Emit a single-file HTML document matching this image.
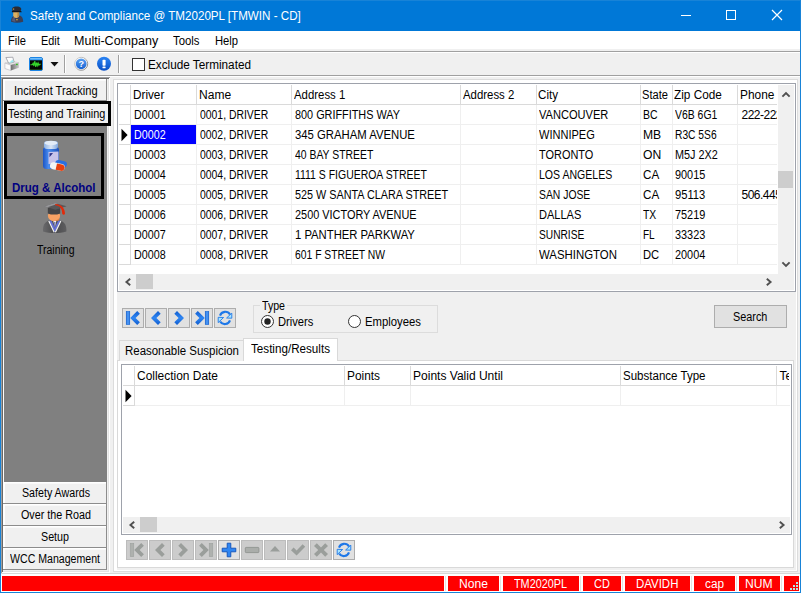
<!DOCTYPE html>
<html><head><meta charset="utf-8"><title>Safety and Compliance</title>
<style>
html,body{margin:0;padding:0}
body{width:801px;height:593px;overflow:hidden;background:#f0f0f0;position:relative;font:12px/16px "Liberation Sans", sans-serif}
#w{position:absolute;left:0;top:0;width:801px;height:593px;overflow:hidden}
#w div,#w span,#w svg{position:absolute;box-sizing:border-box}
#w span{white-space:pre;line-height:16px;transform-origin:0 0}
</style></head><body><div id="w">
<div style="left:0px;top:0px;width:801px;height:593px;background:#f0f0f0;"></div>
<div style="left:0px;top:0px;width:801px;height:31px;background:#0078d7;"></div>
<div style="left:0px;top:0px;width:1px;height:593px;background:#1883d7;"></div>
<div style="left:800px;top:0px;width:1px;height:593px;background:#1883d7;"></div>
<div style="left:0px;top:592px;width:801px;height:1px;background:#1883d7;"></div>
<div style="left:0px;top:0px;width:801px;height:1px;background:#1883d7;"></div>
<svg style="left:10px;top:6px" width="16" height="18" viewBox="0 0 16 18">
<path d="M1 15.800c0-3.800 1.500-6 4-6.600h4.200c2.500.6 4 2.800 4 6.600-3.800 1.300-8.400 1.300-12.200 0z" fill="#3a3f56"/>
<path d="M2 15c.2-2.400 1-4 2.400-4.800l1.200 5.800z" fill="#555b78"/>
<path d="M3.200 5.800h6v3.400c0 1.500-1.300 2.800-3 2.800s-3-1.300-3-2.800z" fill="#ddb062"/>
<path d="M7.400 6.500h1.800v3c-.3 1-1 1.800-1.800 2.200z" fill="#b98a45"/>
<path d="M1.900 3c.4-1.800 2.600-2.400 4.700-2.400s4.300.6 4.700 2.400l-.7 2.200H2.600z" fill="#2a2b35"/>
<path d="M2 4.900h9.200l.5 1.400H1.800z" fill="#17171e"/>
<rect x="6.200" y="13" width="1.500" height="1.300" fill="#d9a53c"/>
<rect x="2.800" y="2.500" width="1.400" height="1.200" fill="#c9a04c"/>
</svg>
<svg style="left:660px;top:0" width="140" height="31" viewBox="0 0 140 31" fill="none" stroke="#fff" stroke-width="1">
<path d="M21 15.500h10"/><rect x="66.500" y="10.500" width="9" height="9"/><path d="M112 10l10 10M122 10l-10 10" stroke-width="1.200"/></svg>
<div style="left:1px;top:31px;width:799px;height:18px;background:#fff;"></div>
<div style="left:1px;top:51px;width:799px;height:1px;background:#a0a0a0;"></div>
<div style="left:1px;top:52px;width:799px;height:1px;background:#fff;"></div>
<div style="left:1px;top:75px;width:799px;height:1px;background:#a0a0a0;"></div>
<div style="left:1px;top:76px;width:799px;height:1px;background:#fff;"></div>
<svg style="left:4px;top:56px" width="17" height="16" viewBox="0 0 17 16">
<defs><linearGradient id="pr1" x1="0" x2="1"><stop offset="0" stop-color="#6e6e6e"/><stop offset="1" stop-color="#c9c9c9"/></linearGradient></defs>
<path d="M.9 7.100L9.100 5.400 14.900 6.800 6.800 9.100z" fill="#e4e4e4" stroke="#b4b4b4" stroke-width=".4"/>
<path d="M1.900 1.500L8.800 1.200 10.100 6.100 4.700 7.300z" fill="#fdfdfd" stroke="#8d8d96" stroke-width=".7"/>
<path d="M4.900 6.900L8.600 3.400 9.700 6z" fill="#9cecf2"/>
<path d="M.9 7.100L6.800 9.100V14.500L.9 12.500z" fill="#fbfbfb" stroke="#a9a9b2" stroke-width=".5"/>
<path d="M6.800 9.100L14.900 6.800V11.800L6.800 14.500z" fill="url(#pr1)"/>
<rect x="12" y="7.800" width="1.800" height="1.300" fill="#35c41f"/>
</svg>
<svg style="left:29px;top:57px" width="14" height="14" viewBox="0 0 14 14">
<rect x=".5" y=".5" width="13" height="13" rx="1.600" fill="#050805" stroke="#1a84e6"/>
<rect x="1" y="1" width="12" height="2.300" fill="#2f95f0"/><rect x="1.200" y="1.300" width="11.600" height=".9" fill="#8fd0ff"/>
<path d="M1.500 7.800h1.800l.8-1.600.8 2.800.9-5 .9 6 .8-4.400.8 3 .8-2.600.8 2.200.7-1h1.200" fill="none" stroke="#35d82c" stroke-width="1.100"/>
<rect x="1" y="12" width="12" height=".8" fill="#1f4a1a"/>
</svg>
<svg style="left:50px;top:62px" width="9" height="5" viewBox="0 0 9 5"><path d="M.5 0h8L4.5 4.6z" fill="#111"/></svg>
<div style="left:64px;top:55px;width:1px;height:18px;background:#a0a0a0;"></div>
<div style="left:65px;top:55px;width:1px;height:18px;background:#fff;"></div>
<svg style="left:73px;top:56px" width="16" height="16" viewBox="0 0 16 16">
<defs><linearGradient id="hp1" x1="0" x2="0" y1="0" y2="1"><stop offset="0" stop-color="#fbfbfc"/><stop offset="1" stop-color="#b9bdc6"/></linearGradient>
<linearGradient id="hp2" x1="0" x2="0" y1="0" y2="1"><stop offset="0" stop-color="#5aa2f4"/><stop offset="1" stop-color="#1560d0"/></linearGradient>
<linearGradient id="hp3" x1="0" x2="1" y1="0" y2="1"><stop offset="0" stop-color="#d4d4d4"/><stop offset="1" stop-color="#6e6e6e"/></linearGradient></defs>
<circle cx="8.200" cy="7.800" r="6.500" fill="#fdfdfd" stroke="url(#hp3)" stroke-width=".9"/>
<circle cx="8.200" cy="7.800" r="5.400" fill="url(#hp2)"/>
<text x="8.200" y="11" text-anchor="middle" font-family="Liberation Sans, sans-serif" font-weight="bold" font-size="9" fill="#fff">?</text>
</svg>
<svg style="left:96px;top:56px" width="16" height="16" viewBox="0 0 16 16">
<defs><linearGradient id="in1" x1="0" x2="0" y1="0" y2="1"><stop offset="0" stop-color="#2a84f4"/><stop offset="1" stop-color="#0a4fc4"/></linearGradient></defs>
<circle cx="8" cy="7.800" r="7" fill="url(#in1)"/>
<rect x="6.500" y="3.700" width="3.100" height="6.100" rx=".7" fill="#fff"/><rect x="6.500" y="10.400" width="3.100" height="1.900" rx=".6" fill="#fff"/>
</svg>
<div style="left:118px;top:55px;width:1px;height:18px;background:#a0a0a0;"></div>
<div style="left:119px;top:55px;width:1px;height:18px;background:#fff;"></div>
<div style="left:132px;top:58px;width:13px;height:13px;background:#fff;border:1px solid #333;"></div>
<div style="left:1px;top:77px;width:109px;height:1px;background:#a0a0a0;"></div>
<div style="left:2px;top:78px;width:107px;height:1px;background:#696969;"></div>
<div style="left:1px;top:77px;width:1px;height:496px;background:#a0a0a0;"></div>
<div style="left:2px;top:78px;width:1px;height:494px;background:#696969;"></div>
<div style="left:109px;top:78px;width:1px;height:495px;background:#fff;"></div>
<div style="left:108px;top:79px;width:1px;height:493px;background:#e3e3e3;"></div>
<div style="left:3px;top:571px;width:106px;height:1px;background:#e3e3e3;"></div>
<div style="left:2px;top:572px;width:108px;height:1px;background:#fff;"></div>
<div style="left:3px;top:79px;width:105px;height:492px;background:#f0f0f0;"></div>
<div style="left:3px;top:79px;width:1px;height:491px;background:#fff;"></div>
<div style="left:4px;top:79px;width:103px;height:403px;background:#808080;"></div>
<div style="left:3px;top:79px;width:104px;height:22px;background:#f0f0f0;"></div>
<div style="left:3px;top:79px;width:104px;height:1px;background:#fff;"></div>
<div style="left:3px;top:80px;width:104px;height:1px;background:#f9f9f9;"></div>
<div style="left:3px;top:79px;width:2px;height:22px;background:#fff;"></div>
<div style="left:3px;top:100px;width:104px;height:1px;background:#8c8c8c;"></div>
<div style="left:106px;top:79px;width:1px;height:22px;background:#8c8c8c;"></div>
<div style="left:4px;top:101px;width:107px;height:25px;background:#f0f0f0;border:3px solid #000;"></div>
<div style="left:4px;top:133px;width:100px;height:66px;background:#808080;border:3px solid #000;"></div>
<div style="left:3px;top:482px;width:104px;height:22px;background:#f0f0f0;"></div>
<div style="left:3px;top:482px;width:104px;height:1px;background:#fff;"></div>
<div style="left:3px;top:483px;width:104px;height:1px;background:#f9f9f9;"></div>
<div style="left:3px;top:482px;width:2px;height:22px;background:#fff;"></div>
<div style="left:3px;top:503px;width:104px;height:1px;background:#8c8c8c;"></div>
<div style="left:106px;top:482px;width:1px;height:22px;background:#8c8c8c;"></div>
<div style="left:3px;top:504px;width:104px;height:22px;background:#f0f0f0;"></div>
<div style="left:3px;top:504px;width:104px;height:1px;background:#fff;"></div>
<div style="left:3px;top:505px;width:104px;height:1px;background:#f9f9f9;"></div>
<div style="left:3px;top:504px;width:2px;height:22px;background:#fff;"></div>
<div style="left:3px;top:525px;width:104px;height:1px;background:#8c8c8c;"></div>
<div style="left:106px;top:504px;width:1px;height:22px;background:#8c8c8c;"></div>
<div style="left:3px;top:526px;width:104px;height:22px;background:#f0f0f0;"></div>
<div style="left:3px;top:526px;width:104px;height:1px;background:#fff;"></div>
<div style="left:3px;top:527px;width:104px;height:1px;background:#f9f9f9;"></div>
<div style="left:3px;top:526px;width:2px;height:22px;background:#fff;"></div>
<div style="left:3px;top:547px;width:104px;height:1px;background:#8c8c8c;"></div>
<div style="left:106px;top:526px;width:1px;height:22px;background:#8c8c8c;"></div>
<div style="left:3px;top:548px;width:104px;height:22px;background:#f0f0f0;"></div>
<div style="left:3px;top:548px;width:104px;height:1px;background:#fff;"></div>
<div style="left:3px;top:549px;width:104px;height:1px;background:#f9f9f9;"></div>
<div style="left:3px;top:548px;width:2px;height:22px;background:#fff;"></div>
<div style="left:3px;top:569px;width:104px;height:1px;background:#8c8c8c;"></div>
<div style="left:106px;top:548px;width:1px;height:22px;background:#8c8c8c;"></div>
<svg style="left:39px;top:138px" width="32" height="34" viewBox="0 0 32 34">
<defs><linearGradient id="bg1" x1="0" x2="1"><stop offset="0" stop-color="#1d55c4"/><stop offset=".35" stop-color="#4a8df0"/><stop offset="1" stop-color="#1c4fb8"/></linearGradient>
<linearGradient id="cg1" x1="0" x2="1"><stop offset="0" stop-color="#8fb4e6"/><stop offset=".5" stop-color="#dbe6f6"/><stop offset="1" stop-color="#7fa6de"/></linearGradient></defs>
<path d="M4 12c0-2 1-3 3-3h10c2 0 3 1 3 3v16c0 2-1.4 3-3.4 3H7.400c-2 0-3.400-1-3.400-3z" fill="url(#bg1)"/>
<path d="M9.500 14l10-.5v12l-10 .5z" fill="#c8c3ea"/>
<path d="M10.500 15.200l3.500-.2-3.500 4.200z" fill="#2a2f86"/>
<rect x="5" y="3" width="14" height="8" rx="3" fill="url(#cg1)"/>
<ellipse cx="12" cy="5" rx="6.600" ry="2.200" fill="#e3ecf8"/>
<rect x="16" y="22.600" width="12" height="6.400" rx="3.200" fill="#2a6fe0" transform="rotate(12 22 26)"/>
<rect x="11" y="25" width="15" height="7" rx="3.500" fill="#f4f4f4" transform="rotate(12 18 28)"/>
<path d="M18 25.400l5 1c2 .5 3 2 2.600 3.900s-2 2.900-4 2.500l-5-1z" fill="#e8400f"/>
</svg>
<svg style="left:39px;top:200px" width="32" height="34" viewBox="0 0 32 34">
<defs><linearGradient id="gb" x1="0" x2="1"><stop offset="0" stop-color="#6a6a6c"/><stop offset=".5" stop-color="#4a4a4c"/><stop offset="1" stop-color="#5e5e60"/></linearGradient></defs>
<path d="M4 31.500c-.4-5.500 1.600-9.800 6.200-10.900h10.800c4.600 1.100 6.800 5.400 6.400 10.900-7 2-16.400 2-23.400 0z" fill="url(#gb)"/>
<path d="M10.200 20.800l5.600 11.600 5.600-11.600-2.200-.4L15.800 27.500 12.400 20.400z" fill="#6470d4"/>
<path d="M9.800 21l5.400 11.200M21.800 21l-5.400 11.200" stroke="#f4f4f4" stroke-width="1.200" fill="none"/>
<path d="M14.300 21h3l-1.500 6.500z" fill="#f2f2f2"/><path d="M15.300 22h1l-.5 7z" fill="#3a3fa0"/>
<ellipse cx="15" cy="15.800" rx="6.100" ry="5.400" fill="#f8a264"/>
<path d="M17 20.500c2-.6 3.400-2 4-4.200l-1.500 4.400z" fill="#e8813c"/>
<path d="M8.800 8h12.400v5.400c-4 1.600-8.400 1.600-12.400 0z" fill="#454547"/>
<path d="M5.500 6.200L16 3l11.700 3.200L16.400 9.800z" fill="#58585a"/>
<path d="M5.500 6.200L16 3l3 .8L8.500 7.200z" fill="#97979a"/>
<path d="M16.200 5.200c4.400.2 7 3 7 8.600.8 1.300 2 1.300 2.800.2 0-5.800-3.400-9.600-9.800-10z" fill="#e22a0a"/>
</svg>
<div style="left:113px;top:79px;width:685px;height:493px;background:#fff;border:1px solid #dcdcdc;"></div>
<div style="left:117px;top:83px;width:679px;height:487px;background:#f0f0f0;"></div>
<div style="left:117px;top:83px;width:679px;height:209px;background:#fff;border:1px solid #9ea2ab;"></div>
<div style="left:119px;top:104px;width:658px;height:1px;background:#dadada;"></div>
<div style="left:130px;top:85px;width:1px;height:19px;background:#dadada;"></div>
<div style="left:196px;top:85px;width:1px;height:19px;background:#dadada;"></div>
<div style="left:291px;top:85px;width:1px;height:19px;background:#dadada;"></div>
<div style="left:460px;top:85px;width:1px;height:19px;background:#dadada;"></div>
<div style="left:536px;top:85px;width:1px;height:19px;background:#dadada;"></div>
<div style="left:640px;top:85px;width:1px;height:19px;background:#dadada;"></div>
<div style="left:672px;top:85px;width:1px;height:19px;background:#dadada;"></div>
<div style="left:737px;top:85px;width:1px;height:19px;background:#dadada;"></div>
<div style="left:196px;top:105px;width:1px;height:160px;background:#efefef;"></div>
<div style="left:291px;top:105px;width:1px;height:160px;background:#efefef;"></div>
<div style="left:460px;top:105px;width:1px;height:160px;background:#efefef;"></div>
<div style="left:536px;top:105px;width:1px;height:160px;background:#efefef;"></div>
<div style="left:640px;top:105px;width:1px;height:160px;background:#efefef;"></div>
<div style="left:672px;top:105px;width:1px;height:160px;background:#efefef;"></div>
<div style="left:737px;top:105px;width:1px;height:160px;background:#efefef;"></div>
<div style="left:130px;top:105px;width:1px;height:160px;background:#dadada;"></div>
<div style="left:131px;top:124px;width:646px;height:1px;background:#efefef;"></div>
<div style="left:119px;top:124px;width:11px;height:1px;background:#dadada;"></div>
<div style="left:131px;top:144px;width:646px;height:1px;background:#efefef;"></div>
<div style="left:119px;top:144px;width:11px;height:1px;background:#dadada;"></div>
<div style="left:131px;top:164px;width:646px;height:1px;background:#efefef;"></div>
<div style="left:119px;top:164px;width:11px;height:1px;background:#dadada;"></div>
<div style="left:131px;top:184px;width:646px;height:1px;background:#efefef;"></div>
<div style="left:119px;top:184px;width:11px;height:1px;background:#dadada;"></div>
<div style="left:131px;top:204px;width:646px;height:1px;background:#efefef;"></div>
<div style="left:119px;top:204px;width:11px;height:1px;background:#dadada;"></div>
<div style="left:131px;top:224px;width:646px;height:1px;background:#efefef;"></div>
<div style="left:119px;top:224px;width:11px;height:1px;background:#dadada;"></div>
<div style="left:131px;top:244px;width:646px;height:1px;background:#efefef;"></div>
<div style="left:119px;top:244px;width:11px;height:1px;background:#dadada;"></div>
<div style="left:131px;top:264px;width:646px;height:1px;background:#efefef;"></div>
<div style="left:119px;top:264px;width:11px;height:1px;background:#dadada;"></div>
<div style="left:131px;top:125px;width:65px;height:19px;background:#0000ff;"></div>
<svg style="left:121px;top:128px" width="8" height="14" viewBox="0 0 8 14"><path d="M.5 .8L6.600 7 .5 13.200z" fill="#000"/></svg>
<div style="left:738px;top:105px;width:39px;height:19px;overflow:hidden"><span style="left:3.500px;top:2px;letter-spacing:-.5px">222-2222</span></div>
<div style="left:738px;top:185px;width:39px;height:19px;overflow:hidden"><span style="left:3.500px;top:2px;letter-spacing:-.5px">506.4455</span></div>
<div style="left:778px;top:85px;width:16px;height:205px;background:#f0f0f0;"></div>
<div style="left:778px;top:171px;width:15px;height:17px;background:#cdcdcd;"></div>
<svg style="left:779.5px;top:88px" width="12" height="12" viewBox="-6 -6 12 12"><path d="M-3.6 2.6L0 -1L3.6 2.6" fill="none" stroke="#505050" stroke-width="1.9"/></svg>
<svg style="left:779.5px;top:259px" width="12" height="12" viewBox="-6 -6 12 12"><path d="M-3.6 -2.6L0 1L3.6 -2.6" fill="none" stroke="#505050" stroke-width="1.9"/></svg>
<div style="left:119px;top:274px;width:675px;height:16px;background:#f0f0f0;"></div>
<div style="left:136px;top:274px;width:17px;height:15px;background:#cdcdcd;"></div>
<svg style="left:121px;top:275.5px" width="12" height="12" viewBox="-6 -6 12 12"><path d="M3.2 -3.3L-0.6 0L3.2 3.3" fill="none" stroke="#505050" stroke-width="1.9"/></svg>
<svg style="left:763.5px;top:275.5px" width="12" height="12" viewBox="-6 -6 12 12"><path d="M-3.2 -3.3L0.6 0L-3.2 3.3" fill="none" stroke="#505050" stroke-width="1.9"/></svg>
<svg width="0" height="0" style="left:0;top:0"><defs><linearGradient id="nb" x1="0" x2="0" y1="0" y2="1"><stop offset="0" stop-color="#0f5ccf"/><stop offset=".5" stop-color="#2f86f2"/><stop offset="1" stop-color="#0f5ccf"/></linearGradient><linearGradient id="nbar" x1="0" x2="1"><stop offset="0" stop-color="#0f5ccf"/><stop offset=".5" stop-color="#58a6ff"/><stop offset="1" stop-color="#0f5ccf"/></linearGradient></defs></svg>
<div style="left:122px;top:308px;width:22px;height:20px;background:#e1e1e1;border:1px solid #adadad;"></div>
<svg style="left:122px;top:308px" width="22" height="20" viewBox="0 0 22 20"><rect x="4.2" y="3.300" width="3.600" height="13.400" fill="url(#nbar)" stroke="#1464d2" stroke-width=".5"/><path d="M17.9 5.700L15.2 3L8.2 10L15.2 17L17.9 14.300L13.6 10Z" fill="url(#nb)"/></svg>
<div style="left:145px;top:308px;width:22px;height:20px;background:#e1e1e1;border:1px solid #adadad;"></div>
<svg style="left:145px;top:308px" width="22" height="20" viewBox="0 0 22 20"><path d="M15.7 5.700L13.0 3L6.0 10L13.0 17L15.7 14.300L11.4 10Z" fill="url(#nb)"/></svg>
<div style="left:168px;top:308px;width:22px;height:20px;background:#e1e1e1;border:1px solid #adadad;"></div>
<svg style="left:168px;top:308px" width="22" height="20" viewBox="0 0 22 20"><path d="M6.3 5.700L9.0 3L16.0 10L9.0 17L6.3 14.300L10.6 10Z" fill="url(#nb)"/></svg>
<div style="left:191px;top:308px;width:22px;height:20px;background:#e1e1e1;border:1px solid #adadad;"></div>
<svg style="left:191px;top:308px" width="22" height="20" viewBox="0 0 22 20"><rect x="14.2" y="3.300" width="3.600" height="13.400" fill="url(#nbar)" stroke="#1464d2" stroke-width=".5"/><path d="M4.1 5.700L6.8 3L13.8 10L6.8 17L4.1 14.300L8.4 10Z" fill="url(#nb)"/></svg>
<div style="left:214px;top:308px;width:22px;height:20px;background:#e1e1e1;border:1px solid #adadad;"></div>
<svg style="left:214px;top:308px" width="22" height="20" viewBox="0 0 22 20"><path d="M6 7.600A5.500 5.500 0 0 1 16 6.600" fill="none" stroke="#1e78e8" stroke-width="2.100"/><path d="M17.800 5.200V10.200L12.600 10Z" fill="#a8e6ff" stroke="#1e78e8" stroke-width=".9"/><path d="M16 12.400A5.500 5.500 0 0 1 6.200 13.600" fill="none" stroke="#1e78e8" stroke-width="2.100"/><path d="M4.200 14.600V9.300L9.600 9.500Z" fill="#a8e6ff" stroke="#1e78e8" stroke-width=".9"/></svg>
<div style="left:253px;top:305px;width:185px;height:28px;background:transparent;border:1px solid #dcdcdc;"></div>
<div style="left:260px;top:300px;width:27px;height:12px;background:#f0f0f0;"></div>
<svg style="left:261px;top:315px" width="13" height="13" viewBox="0 0 13 13"><circle cx="6.500" cy="6.500" r="6" fill="#fff" stroke="#333" stroke-width="1"/><circle cx="6.500" cy="6.500" r="3.200" fill="#222"/></svg>
<svg style="left:348px;top:315px" width="13" height="13" viewBox="0 0 13 13"><circle cx="6.500" cy="6.500" r="6" fill="#fff" stroke="#333" stroke-width="1"/></svg>
<div style="left:714px;top:305px;width:73px;height:23px;background:#e1e1e1;border:1px solid #adadad;"></div>
<div style="left:117px;top:360px;width:677px;height:208px;background:#fff;border:1px solid #d9d9d9;"></div>
<div style="left:119px;top:340px;width:125px;height:21px;background:#f0f0f0;border:1px solid #d9d9d9;border-bottom:none;"></div>
<div style="left:243px;top:338px;width:95px;height:23px;background:#fff;border:1px solid #d9d9d9;border-bottom:none;"></div>
<div style="left:121px;top:364px;width:671px;height:171px;background:#fff;border:1px solid #9ea2ab;"></div>
<div style="left:123px;top:385px;width:667px;height:1px;background:#dadada;"></div>
<div style="left:135px;top:405px;width:655px;height:1px;background:#efefef;"></div>
<div style="left:123px;top:405px;width:11px;height:1px;background:#dadada;"></div>
<div style="left:134px;top:366px;width:1px;height:19px;background:#dadada;"></div>
<div style="left:134px;top:386px;width:1px;height:20px;background:#dadada;"></div>
<div style="left:344px;top:366px;width:1px;height:19px;background:#dadada;"></div>
<div style="left:344px;top:386px;width:1px;height:20px;background:#efefef;"></div>
<div style="left:410px;top:366px;width:1px;height:19px;background:#dadada;"></div>
<div style="left:410px;top:386px;width:1px;height:20px;background:#efefef;"></div>
<div style="left:620px;top:366px;width:1px;height:19px;background:#dadada;"></div>
<div style="left:620px;top:386px;width:1px;height:20px;background:#efefef;"></div>
<div style="left:776px;top:366px;width:1px;height:19px;background:#dadada;"></div>
<div style="left:776px;top:386px;width:1px;height:20px;background:#efefef;"></div>
<svg style="left:125px;top:389px" width="8" height="14" viewBox="0 0 8 14"><path d="M.5 .8L6.600 7 .5 13.200z" fill="#000"/></svg>
<div style="left:777px;top:366px;width:12px;height:19px;overflow:hidden"><span style="left:2.500px;top:2px">Te</span></div>
<div style="left:123px;top:517px;width:667px;height:16px;background:#f0f0f0;"></div>
<div style="left:140px;top:517px;width:17px;height:15px;background:#cdcdcd;"></div>
<svg style="left:125px;top:518.5px" width="12" height="12" viewBox="-6 -6 12 12"><path d="M3.2 -3.3L-0.6 0L3.2 3.3" fill="none" stroke="#505050" stroke-width="1.9"/></svg>
<svg style="left:776.5px;top:518.5px" width="12" height="12" viewBox="-6 -6 12 12"><path d="M-3.2 -3.3L0.6 0L-3.2 3.3" fill="none" stroke="#505050" stroke-width="1.9"/></svg>
<div style="left:126px;top:540px;width:22px;height:20px;background:#cccccc;border:1px solid #bcbcbc;"></div>
<svg style="left:126px;top:540px" width="22" height="20" viewBox="0 0 22 20"><rect x="4.2" y="3.300" width="3.600" height="13.400" fill="#aeb1ae" stroke="#9a9e9b" stroke-width=".5"/><path d="M17.9 5.700L15.2 3L8.2 10L15.2 17L17.9 14.300L13.6 10Z" fill="#9a9e9b"/></svg>
<div style="left:149px;top:540px;width:22px;height:20px;background:#cccccc;border:1px solid #bcbcbc;"></div>
<svg style="left:149px;top:540px" width="22" height="20" viewBox="0 0 22 20"><path d="M15.7 5.700L13.0 3L6.0 10L13.0 17L15.7 14.300L11.4 10Z" fill="#9a9e9b"/></svg>
<div style="left:172px;top:540px;width:22px;height:20px;background:#cccccc;border:1px solid #bcbcbc;"></div>
<svg style="left:172px;top:540px" width="22" height="20" viewBox="0 0 22 20"><path d="M6.3 5.700L9.0 3L16.0 10L9.0 17L6.3 14.300L10.6 10Z" fill="#9a9e9b"/></svg>
<div style="left:195px;top:540px;width:22px;height:20px;background:#cccccc;border:1px solid #bcbcbc;"></div>
<svg style="left:195px;top:540px" width="22" height="20" viewBox="0 0 22 20"><rect x="14.2" y="3.300" width="3.600" height="13.400" fill="#aeb1ae" stroke="#9a9e9b" stroke-width=".5"/><path d="M4.1 5.700L6.8 3L13.8 10L6.8 17L4.1 14.300L8.4 10Z" fill="#9a9e9b"/></svg>
<div style="left:218px;top:540px;width:22px;height:20px;background:#e1e1e1;border:1px solid #adadad;"></div>
<svg style="left:218px;top:540px" width="22" height="20" viewBox="0 0 22 20"><path d="M9.200 3.200h3.600v5h5v3.600h-5v5h-3.600v-5h-5v-3.600h5z" fill="#2f86f2" stroke="#0f50b8" stroke-width=".9"/></svg>
<div style="left:241px;top:540px;width:22px;height:20px;background:#cccccc;border:1px solid #bcbcbc;"></div>
<svg style="left:241px;top:540px" width="22" height="20" viewBox="0 0 22 20"><rect x="4.300" y="7.400" width="13.600" height="5.200" rx=".8" fill="#aaadaa" stroke="#8f9390" stroke-width=".9"/></svg>
<div style="left:264px;top:540px;width:22px;height:20px;background:#cccccc;border:1px solid #bcbcbc;"></div>
<svg style="left:264px;top:540px" width="22" height="20" viewBox="0 0 22 20"><path d="M6 11.500L11 6l5 5.500z" fill="#9a9e9b"/></svg>
<div style="left:287px;top:540px;width:22px;height:20px;background:#cccccc;border:1px solid #bcbcbc;"></div>
<svg style="left:287px;top:540px" width="22" height="20" viewBox="0 0 22 20"><path d="M4 10.200L6.600 7.600 9.600 10.600 15.600 4.200 18.200 6.800 9.600 15.600z" fill="#9a9e9b"/></svg>
<div style="left:310px;top:540px;width:22px;height:20px;background:#cccccc;border:1px solid #bcbcbc;"></div>
<svg style="left:310px;top:540px" width="22" height="20" viewBox="0 0 22 20"><path d="M4 6L6.800 3.200 11 7.400 15.200 3.200 18 6 13.800 10 18 14 15.200 16.800 11 12.600 6.800 16.800 4 14 8.200 10z" fill="#9a9e9b"/></svg>
<div style="left:333px;top:540px;width:22px;height:20px;background:#e1e1e1;border:1px solid #adadad;"></div>
<svg style="left:333px;top:540px" width="22" height="20" viewBox="0 0 22 20"><path d="M6 7.600A5.500 5.500 0 0 1 16 6.600" fill="none" stroke="#1e78e8" stroke-width="2.100"/><path d="M17.800 5.200V10.200L12.600 10Z" fill="#a8e6ff" stroke="#1e78e8" stroke-width=".9"/><path d="M16 12.400A5.500 5.500 0 0 1 6.200 13.600" fill="none" stroke="#1e78e8" stroke-width="2.100"/><path d="M4.200 14.600V9.300L9.600 9.500Z" fill="#a8e6ff" stroke="#1e78e8" stroke-width=".9"/></svg>
<div style="left:1px;top:573px;width:799px;height:1px;background:#d7d7d7;"></div>
<div style="left:1px;top:574px;width:799px;height:18px;background:#fff;"></div>
<div style="left:2px;top:576px;width:442px;height:15px;background:#ff0000;"></div>
<div style="left:448px;top:576px;width:51px;height:15px;background:#ff0000;"></div>
<div style="left:445px;top:576px;width:1px;height:15px;background:#e2e2e2;"></div>
<div style="left:503px;top:576px;width:76px;height:15px;background:#ff0000;"></div>
<div style="left:500px;top:576px;width:1px;height:15px;background:#e2e2e2;"></div>
<div style="left:583px;top:576px;width:38px;height:15px;background:#ff0000;"></div>
<div style="left:580px;top:576px;width:1px;height:15px;background:#e2e2e2;"></div>
<div style="left:625px;top:576px;width:65px;height:15px;background:#ff0000;"></div>
<div style="left:622px;top:576px;width:1px;height:15px;background:#e2e2e2;"></div>
<div style="left:694px;top:576px;width:41px;height:15px;background:#ff0000;"></div>
<div style="left:691px;top:576px;width:1px;height:15px;background:#e2e2e2;"></div>
<div style="left:739px;top:576px;width:41px;height:15px;background:#ff0000;"></div>
<div style="left:736px;top:576px;width:1px;height:15px;background:#e2e2e2;"></div>
<div style="left:784px;top:576px;width:15px;height:15px;background:#ff0000;"></div>
<div style="left:781px;top:576px;width:1px;height:15px;background:#e2e2e2;"></div>
<svg style="left:788px;top:580px" width="12" height="12" viewBox="0 0 12 12" fill="#b2e6e6"><rect x="8" y="2" width="2" height="2"/><rect x="8" y="5" width="2" height="2"/><rect x="5" y="5" width="2" height="2"/><rect x="8" y="8" width="2" height="2"/><rect x="5" y="8" width="2" height="2"/><rect x="2" y="8" width="2" height="2"/></svg>
<span style="left:29.7px;top:8px;color:#fff;transform:scaleX(0.9685);">Safety and Compliance @ TM2020PL [TMWIN - CD]</span>
<span style="left:8.4px;top:33px;color:#000;transform:scaleX(0.9305);">File</span>
<span style="left:40.6px;top:33px;color:#000;transform:scaleX(0.9039);">Edit</span>
<span style="left:74.3px;top:33px;color:#000;transform:scaleX(1.0433);">Multi-Company</span>
<span style="left:173.2px;top:33px;color:#000;transform:scaleX(0.9459);">Tools</span>
<span style="left:214.7px;top:33px;color:#000;transform:scaleX(0.9357);">Help</span>
<span style="left:148.2px;top:57px;color:#000;transform:scaleX(0.9793);">Exclude Terminated</span>
<span style="left:13.8px;top:83px;color:#000;transform:scaleX(0.9215);">Incident Tracking</span>
<span style="left:7.8px;top:106px;color:#000;transform:scaleX(0.9068);">Testing and Training</span>
<span style="left:12px;top:180px;color:#000080;font-weight:bold;transform:scaleX(0.9610);">Drug &amp; Alcohol</span>
<span style="left:37px;top:242px;color:#000;transform:scaleX(0.8737);">Training</span>
<span style="left:21.5px;top:485px;color:#000;transform:scaleX(0.8889);">Safety Awards</span>
<span style="left:20.5px;top:507px;color:#000;transform:scaleX(0.8969);">Over the Road</span>
<span style="left:41.3px;top:529px;color:#000;transform:scaleX(0.8929);">Setup</span>
<span style="left:10.3px;top:551px;color:#000;transform:scaleX(0.8819);">WCC Management</span>
<span style="left:132.8px;top:87px;color:#000;transform:scaleX(0.9781);">Driver</span>
<span style="left:199.0px;top:87px;color:#000;transform:scaleX(1.0026);">Name</span>
<span style="left:293.8px;top:87px;color:#000;transform:scaleX(0.9495);">Address 1</span>
<span style="left:462.6px;top:87px;color:#000;transform:scaleX(0.9495);">Address 2</span>
<span style="left:538.0999999999999px;top:87px;color:#000;transform:scaleX(0.9675);">City</span>
<span style="left:641.6999999999999px;top:87px;color:#000;transform:scaleX(0.9275);">State</span>
<span style="left:674.0999999999999px;top:87px;color:#000;transform:scaleX(0.9815);">Zip Code</span>
<span style="left:739.5999999999999px;top:87px;color:#000;transform:scaleX(0.9913);">Phone</span>
<span style="left:134.2px;top:107px;color:#000;transform:scaleX(0.8933);">D0001</span>
<span style="left:200.2px;top:107px;color:#000;transform:scaleX(0.8665);">0001, DRIVER</span>
<span style="left:295px;top:107px;color:#000;transform:scaleX(0.9051);">800 GRIFFITHS WAY</span>
<span style="left:538.5px;top:107px;color:#000;transform:scaleX(0.9225);">VANCOUVER</span>
<span style="left:643.3px;top:107px;color:#000;transform:scaleX(0.8757);">BC</span>
<span style="left:675px;top:107px;color:#000;transform:scaleX(0.8685);">V6B 6G1</span>
<span style="left:134.2px;top:127px;color:#fff;transform:scaleX(0.8933);">D0002</span>
<span style="left:200.2px;top:127px;color:#000;transform:scaleX(0.8665);">0002, DRIVER</span>
<span style="left:295px;top:127px;color:#000;transform:scaleX(0.9429);">345 GRAHAM AVENUE</span>
<span style="left:538.5px;top:127px;color:#000;transform:scaleX(0.9197);">WINNIPEG</span>
<span style="left:643.3px;top:127px;color:#000;transform:scaleX(1.0111);">MB</span>
<span style="left:675px;top:127px;color:#000;transform:scaleX(0.8542);">R3C 5S6</span>
<span style="left:134.2px;top:147px;color:#000;transform:scaleX(0.8933);">D0003</span>
<span style="left:200.2px;top:147px;color:#000;transform:scaleX(0.8665);">0003, DRIVER</span>
<span style="left:295px;top:147px;color:#000;transform:scaleX(0.8674);">40 BAY STREET</span>
<span style="left:538.5px;top:147px;color:#000;transform:scaleX(0.9116);">TORONTO</span>
<span style="left:643.3px;top:147px;color:#000;transform:scaleX(1.0111);">ON</span>
<span style="left:675px;top:147px;color:#000;transform:scaleX(0.9037);">M5J 2X2</span>
<span style="left:134.2px;top:167px;color:#000;transform:scaleX(0.8933);">D0004</span>
<span style="left:200.2px;top:167px;color:#000;transform:scaleX(0.8665);">0004, DRIVER</span>
<span style="left:295px;top:167px;color:#000;transform:scaleX(0.8713);">1111 S FIGUEROA STREET</span>
<span style="left:538.5px;top:167px;color:#000;transform:scaleX(0.8792);">LOS ANGELES</span>
<span style="left:643.3px;top:167px;color:#000;transform:scaleX(0.9717);">CA</span>
<span style="left:675px;top:167px;color:#000;transform:scaleX(0.9079);">90015</span>
<span style="left:134.2px;top:187px;color:#000;transform:scaleX(0.8933);">D0005</span>
<span style="left:200.2px;top:187px;color:#000;transform:scaleX(0.8665);">0005, DRIVER</span>
<span style="left:295px;top:187px;color:#000;transform:scaleX(0.9015);">525 W SANTA CLARA STREET</span>
<span style="left:538.5px;top:187px;color:#000;transform:scaleX(0.8642);">SAN JOSE</span>
<span style="left:643.3px;top:187px;color:#000;transform:scaleX(0.9717);">CA</span>
<span style="left:675px;top:187px;color:#000;transform:scaleX(0.9328);">95113</span>
<span style="left:134.2px;top:207px;color:#000;transform:scaleX(0.8933);">D0006</span>
<span style="left:200.2px;top:207px;color:#000;transform:scaleX(0.8665);">0006, DRIVER</span>
<span style="left:295px;top:207px;color:#000;transform:scaleX(0.9084);">2500 VICTORY AVENUE</span>
<span style="left:538.5px;top:207px;color:#000;transform:scaleX(0.9189);">DALLAS</span>
<span style="left:643.3px;top:207px;color:#000;transform:scaleX(0.8603);">TX</span>
<span style="left:675px;top:207px;color:#000;transform:scaleX(0.9079);">75219</span>
<span style="left:134.2px;top:227px;color:#000;transform:scaleX(0.8933);">D0007</span>
<span style="left:200.2px;top:227px;color:#000;transform:scaleX(0.8665);">0007, DRIVER</span>
<span style="left:295px;top:227px;color:#000;transform:scaleX(0.9398);">1 PANTHER PARKWAY</span>
<span style="left:538.5px;top:227px;color:#000;transform:scaleX(0.8492);">SUNRISE</span>
<span style="left:643.3px;top:227px;color:#000;transform:scaleX(0.8348);">FL</span>
<span style="left:675px;top:227px;color:#000;transform:scaleX(0.9079);">33323</span>
<span style="left:134.2px;top:247px;color:#000;transform:scaleX(0.8933);">D0008</span>
<span style="left:200.2px;top:247px;color:#000;transform:scaleX(0.8665);">0008, DRIVER</span>
<span style="left:295px;top:247px;color:#000;transform:scaleX(0.8625);">601 F STREET NW</span>
<span style="left:538.5px;top:247px;color:#000;transform:scaleX(0.9510);">WASHINGTON</span>
<span style="left:643.3px;top:247px;color:#000;transform:scaleX(0.9341);">DC</span>
<span style="left:675px;top:247px;color:#000;transform:scaleX(0.9079);">20004</span>
<span style="left:262px;top:298px;color:#000;transform:scaleX(0.8841);">Type</span>
<span style="left:277.8px;top:314px;color:#000;transform:scaleX(0.9316);">Drivers</span>
<span style="left:365px;top:314px;color:#000;transform:scaleX(0.9432);">Employees</span>
<span style="left:733.2px;top:309px;color:#000;transform:scaleX(0.9045);">Search</span>
<span style="left:125px;top:343px;color:#000;transform:scaleX(0.9546);">Reasonable Suspicion</span>
<span style="left:251px;top:341px;color:#000;transform:scaleX(0.9708);">Testing/Results</span>
<span style="left:136.7px;top:368px;color:#000;transform:scaleX(0.9954);">Collection Date</span>
<span style="left:346.7px;top:368px;color:#000;transform:scaleX(0.9892);">Points</span>
<span style="left:412.7px;top:368px;color:#000;transform:scaleX(1.0019);">Points Valid Until</span>
<span style="left:622.7px;top:368px;color:#000;transform:scaleX(0.9610);">Substance Type</span>
<span style="left:459.09999999999997px;top:576px;color:#fff;transform:scaleX(1.0074);">None</span>
<span style="left:514.3px;top:576px;color:#fff;transform:scaleX(0.9028);">TM2020PL</span>
<span style="left:593.8px;top:576px;color:#fff;transform:scaleX(0.9110);">CD</span>
<span style="left:635.6px;top:576px;color:#fff;transform:scaleX(0.9538);">DAVIDH</span>
<span style="left:704.8px;top:576px;color:#fff;transform:scaleX(0.9814);">cap</span>
<span style="left:745.1999999999999px;top:576px;color:#fff;transform:scaleX(1.0099);">NUM</span>
</div></body></html>
